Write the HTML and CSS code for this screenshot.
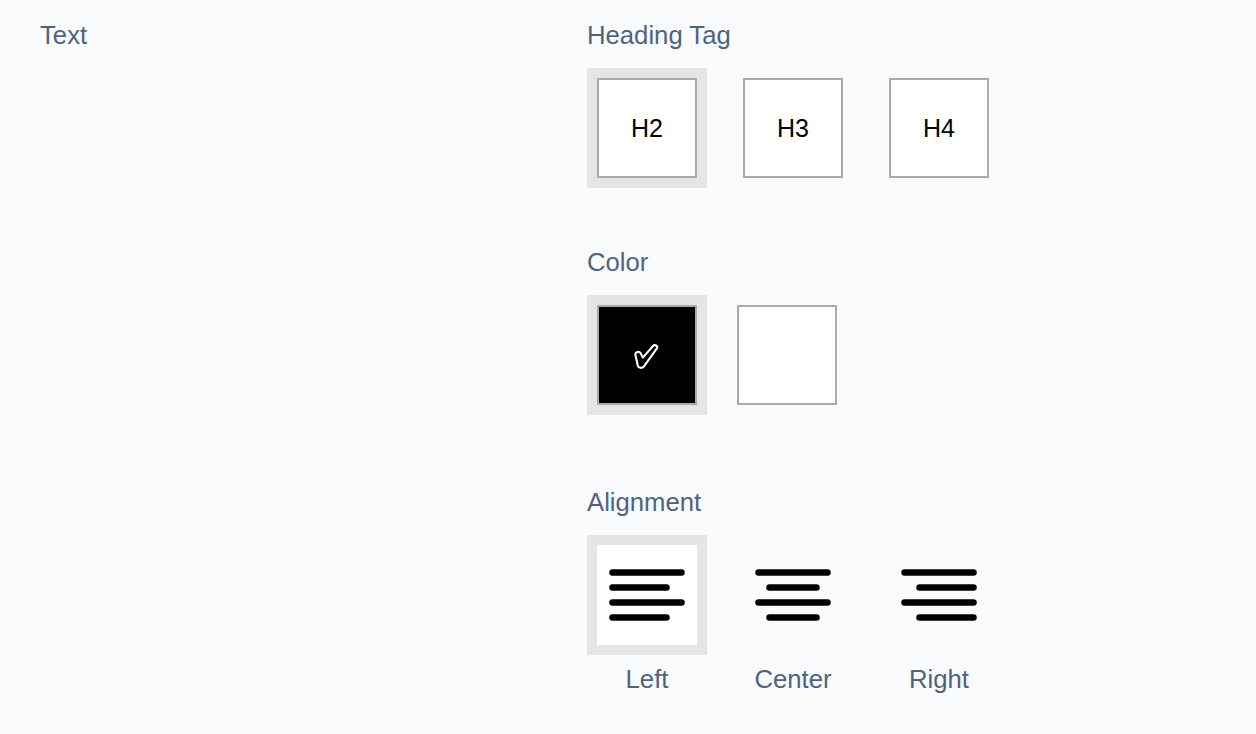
FILE: index.html
```html
<!DOCTYPE html>
<html>
<head>
<meta charset="utf-8">
<link rel="stylesheet" href="styles.css">
</head>
<body>
<div class="page">
  <div class="col-left">
    <div class="label">Text</div>
  </div>
  <div class="col-right">
    <section class="group group-heading">
      <div class="label">Heading Tag</div>
      <div class="options options-wide">
        <div class="opt selected"><div class="box tag">H2</div></div>
        <div class="opt"><div class="box tag">H3</div></div>
        <div class="opt"><div class="box tag">H4</div></div>
      </div>
    </section>
    <section class="group group-color">
      <div class="label">Color</div>
      <div class="options options-narrow">
        <div class="opt selected"><div class="box swatch black">
          <svg width="28" height="28" viewBox="0 0 28 28" class="check">
            <path d="M2.3 13.5 C2.3 11 6 9.8 7.4 11.8 L9.8 16.6 L19.8 5.2 C21.6 3.3 25.2 4.3 24 7.2 L11 25.3 C9.2 27.6 5.4 27.2 4.8 24.8 Z" fill="none" stroke="#fff" stroke-width="2.1" stroke-linejoin="round"/>
          </svg>
        </div></div>
        <div class="opt"><div class="box swatch white"></div></div>
      </div>
    </section>
    <section class="group group-align">
      <div class="label">Alignment</div>
      <div class="options options-wide">
        <div class="opt-col">
          <div class="opt selected"><div class="box icon">
            <svg width="100" height="100" viewBox="0 0 100 100">
              <g stroke="#000" stroke-width="6.5" stroke-linecap="round">
                <line x1="15.5" y1="27.5" x2="84.5" y2="27.5"/>
                <line x1="15.5" y1="42.5" x2="69.5" y2="42.5"/>
                <line x1="15.5" y1="57.5" x2="84.5" y2="57.5"/>
                <line x1="15.5" y1="72.5" x2="69.5" y2="72.5"/>
              </g>
            </svg>
          </div></div>
          <div class="opt-label">Left</div>
        </div>
        <div class="opt-col">
          <div class="opt"><div class="box icon">
            <svg width="100" height="100" viewBox="0 0 100 100">
              <g stroke="#000" stroke-width="6.5" stroke-linecap="round">
                <line x1="15.5" y1="27.5" x2="84.5" y2="27.5"/>
                <line x1="26.5" y1="42.5" x2="73.5" y2="42.5"/>
                <line x1="15.5" y1="57.5" x2="84.5" y2="57.5"/>
                <line x1="26.5" y1="72.5" x2="73.5" y2="72.5"/>
              </g>
            </svg>
          </div></div>
          <div class="opt-label">Center</div>
        </div>
        <div class="opt-col">
          <div class="opt"><div class="box icon">
            <svg width="100" height="100" viewBox="0 0 100 100">
              <g stroke="#000" stroke-width="6.5" stroke-linecap="round">
                <line x1="15.5" y1="27.5" x2="84.5" y2="27.5"/>
                <line x1="30.5" y1="42.5" x2="84.5" y2="42.5"/>
                <line x1="15.5" y1="57.5" x2="84.5" y2="57.5"/>
                <line x1="30.5" y1="72.5" x2="84.5" y2="72.5"/>
              </g>
            </svg>
          </div></div>
          <div class="opt-label">Right</div>
        </div>
      </div>
    </section>
  </div>
</div>
</body>
</html>
```

FILE: styles.css
```css
html, body {
  margin: 0;
  padding: 0;
  background: #fafbfd;
}
body {
  font-family: "Liberation Sans", Arial, Helvetica, sans-serif;
  color: #4f6381;
}
.page {
  display: grid;
  grid-template-columns: 547px 1fr;
  padding: 20px 0 0 40px;
}
.label {
  font-size: 25.7px;
  line-height: 30px;
  height: 30px;
}
.group-heading .options { margin-top: 18px; }
.group-color { margin-top: 59px; }
.group-color .options { margin-top: 18px; }
.group-align { margin-top: 72px; }
.group-align .options { margin-top: 18px; }
.options {
  display: flex;
}
.options-wide { gap: 26px; }
.options-narrow { gap: 20px; }
.opt {
  width: 120px;
  height: 120px;
  padding: 10px;
  box-sizing: border-box;
}
.opt.selected {
  background: #e5e5e5;
}
.box {
  width: 100px;
  height: 100px;
  box-sizing: border-box;
  display: flex;
  align-items: center;
  justify-content: center;
}
.tag {
  border: 2px solid #aaaaaa;
  background: #fff;
  color: #000;
  font-size: 25px;
}
.swatch {
  border: 2px solid #aaaaaa;
}
.swatch.black { background: #000; }
.swatch.white { background: #fff; }
.check { display: block; margin: 0; }
.icon {
  background: transparent;
}
.opt.selected .icon { background: #fff; }
.icon svg { display: block; }
.opt-col {
  display: flex;
  flex-direction: column;
  align-items: center;
}
.opt-label {
  margin-top: 9px;
  font-size: 25.7px;
  line-height: 30px;
}
```
